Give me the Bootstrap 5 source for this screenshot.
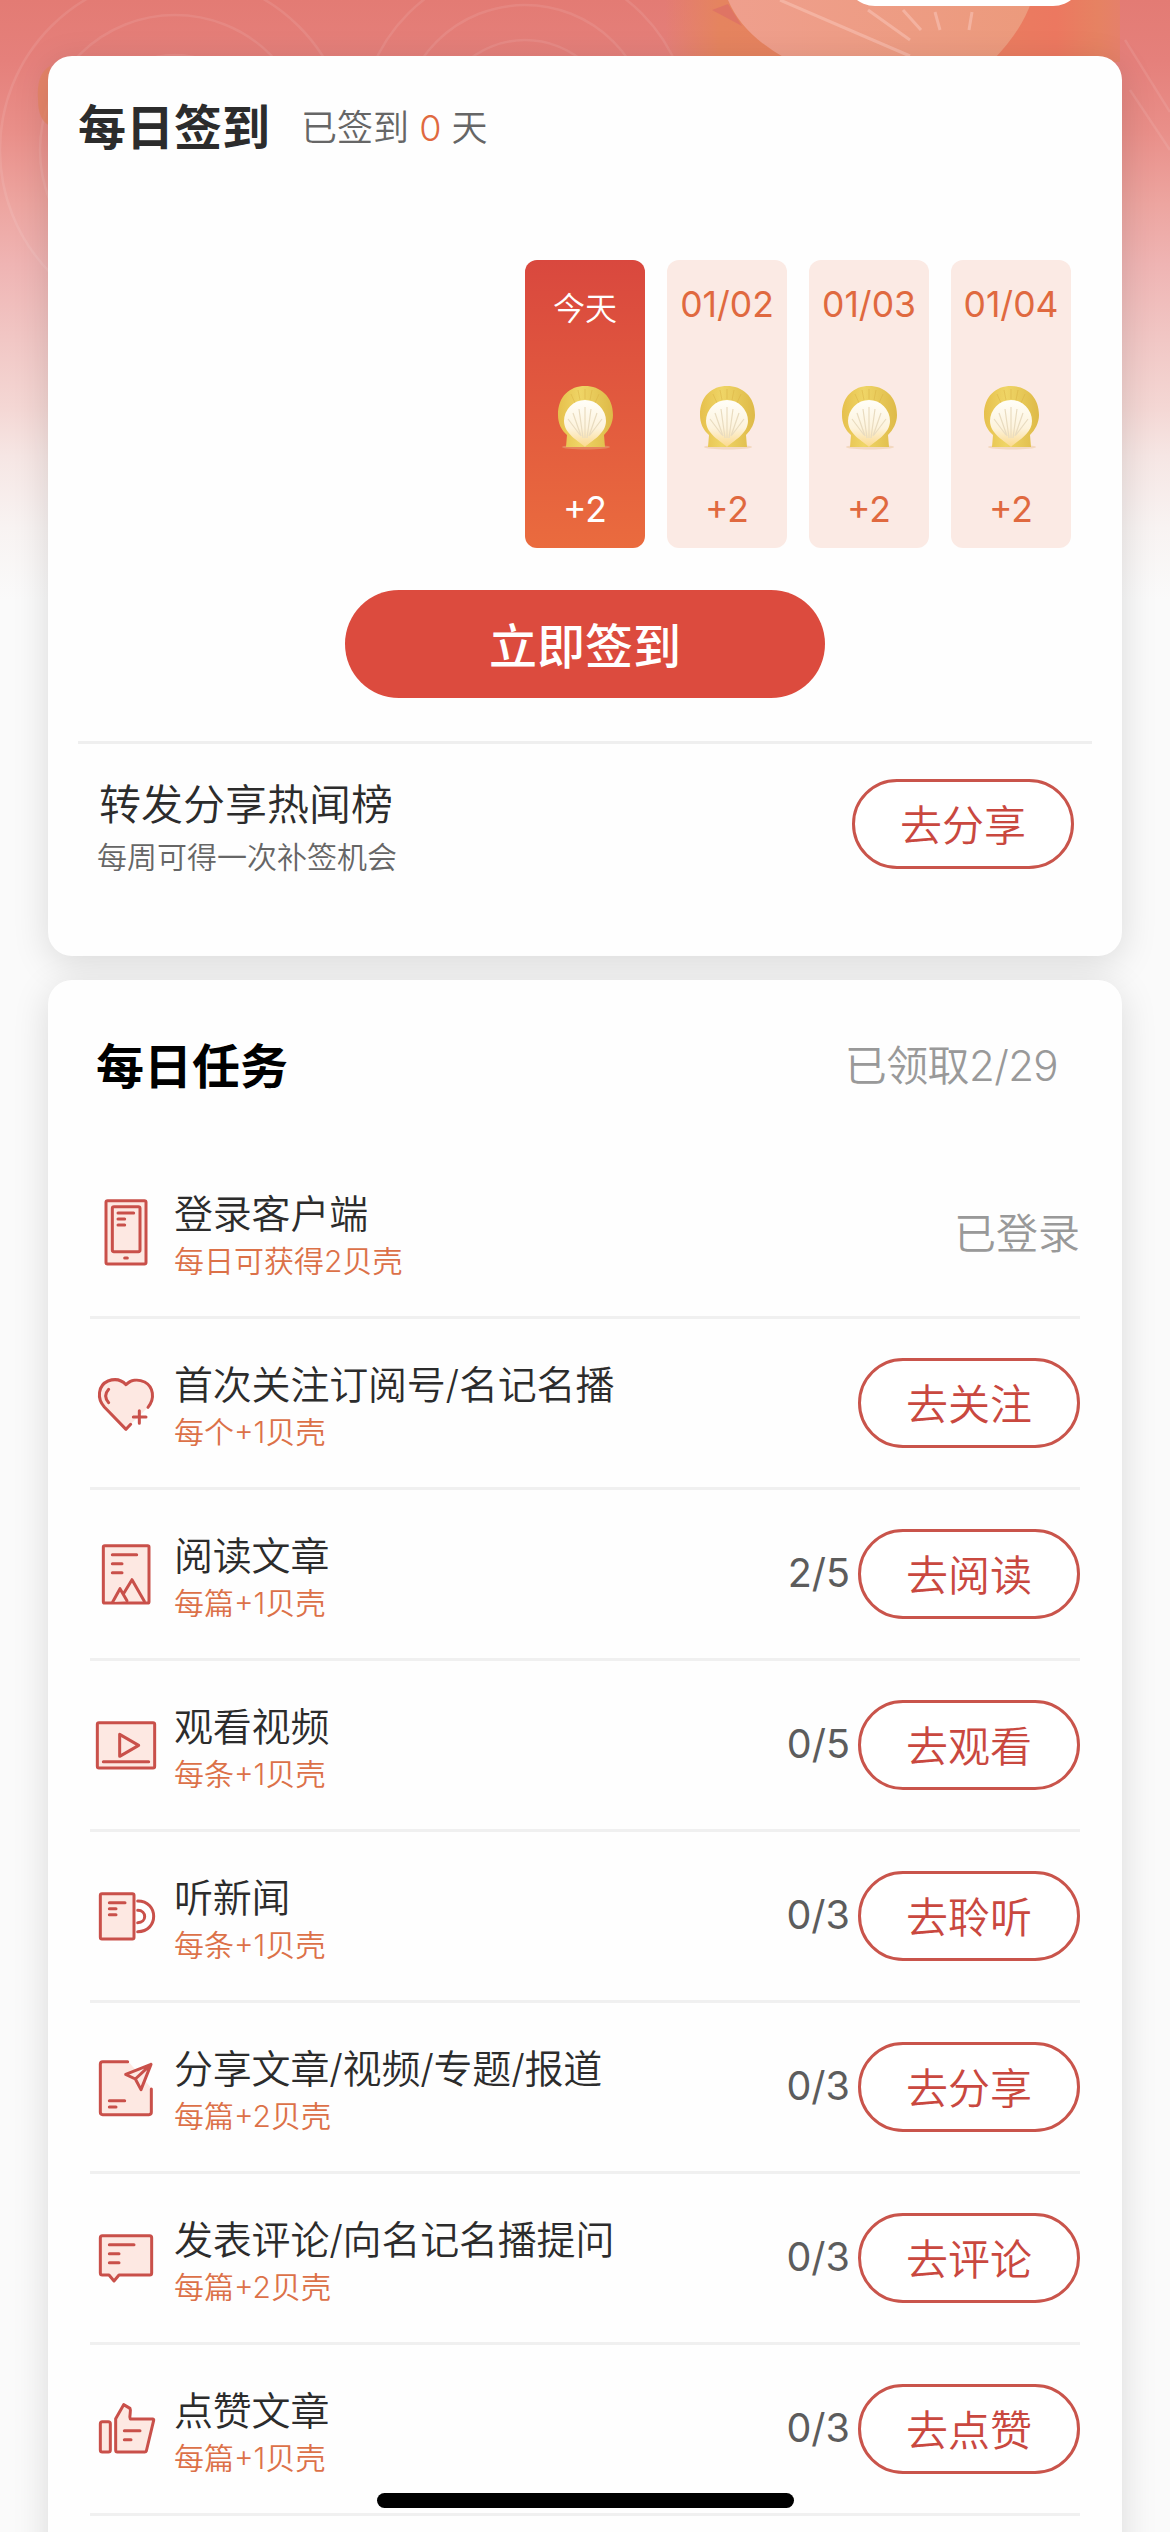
<!DOCTYPE html>
<html lang="zh-CN">
<head>
<meta charset="utf-8">
<meta name="viewport" content="width=device-width, initial-scale=1">
<title>每日签到</title>
<link href="https://cdn.jsdelivr.net/npm/bootstrap@5.3.0/dist/css/bootstrap.min.css" rel="stylesheet">
<style>
  html, body { height: 2532px; overflow: hidden; }
  body { font-family: Inter, "Noto Sans CJK SC", sans-serif; background: #fafafa; color: #2c2c2c; line-height: 1; font-weight: 350; }
  .hero { position: absolute; inset: 0 0 auto 0; width: 1170px; height: 600px; }
  .phone-page { position: relative; height: 2532px; padding: 56px 48px 0; overflow: hidden; }
  .panel { background: #fefefe; border-radius: 24px; box-shadow: 0 8px 36px rgba(0,0,0,.13); }
  .panel-sign { height: 900px; padding: 0 30px; }
  .panel-task { height: 1700px; margin-top: 24px; padding: 0 42px; }
  .head-sign { height: 204px; padding-top: 48px; }
  .ttl { font-size: 48px; font-weight: 700; line-height: 48px; }
  .days-count { font-size: 36px; color: #666; line-height: 48px; margin-left: 31px; }
  .accent { color: #e0693f; }
  .days { gap: 22px; padding-right: 21px; }
  .day { width: 120px; height: 288px; border-radius: 12px; background: #fbeae4; color: #e0693f; font-size: 35.5px; font-weight: 400; padding: 27px 0 20px; }
  .day.today { background: linear-gradient(#d9483e, #ea6b3e); color: #fff; }
  .day.today .when { font-size: 32px; font-weight: 350; padding-top: 4px; }
  .when, .pts { height: 36px; line-height: 36px; white-space: nowrap; }
  .shell { width: 64px; height: 66px; margin-top: 18px; }
  .btn-sign { font-family: "Noto Sans CJK SC", sans-serif; width: 480px; height: 108px; background: #dc4b3e; color: #fff; font-size: 48px; font-weight: 500; line-height: 1; margin: 42px auto 43px; border: 0; padding: 0 0 2px; }
  .rule { height: 3px; background: #efefef; }
  .share-row { padding: 35px 18px 0 21px; }
  .share-ttl { font-size: 42px; line-height: 51px; }
  .share-sub { font-size: 30px; line-height: 54px; color: #666; margin-left: -2px; }
  .btn-go { font-family: "Noto Sans CJK SC", sans-serif; width: 222px; height: 90px; border: 3px solid #c9544b; color: #c9483f; font-size: 42px; font-weight: 350; line-height: 1; padding: 0 0 2px; background: #fff; }
  .head-task { height: 168px; padding: 63px 22px 0 6px; color: #000; }
  .got { font-size: 42px; color: #999; line-height: 48px; }
  .head-task .got { letter-spacing: -.6px; margin-top: -1px; }
  .task { height: 171px; border-bottom: 3px solid #f0f0f0; padding-left: 4px; }
  .task .got { padding-top: 3px; }
  .task svg { width: 64px; height: 72px; margin-top: 2px; fill: #fde8e2; stroke: #c9504a; stroke-width: 9; stroke-linecap: round; stroke-linejoin: round; flex: none; }
  .task-text { padding: 9px 0 0 16px; }
  .t-name { font-size: 39px; line-height: 49px; letter-spacing: -.2px; }
  .t-sub { font-size: 30px; line-height: 47px; color: #dc7148; }
  .t-num { font-size: 39.5px; color: #5c5c5c; font-weight: 400; margin-right: 8px; }
  .home-bar { position: absolute; left: 377px; top: 2493px; width: 417px; height: 15px; border-radius: 8px; background: #000; }
</style>
</head>
<body>
<main class="phone-page">
  <svg class="hero" viewBox="0 0 1170 600" preserveAspectRatio="none">
    <defs>
      <linearGradient id="sky" x1="0" y1="0" x2="0" y2="1"><stop offset="0" stop-color="#e37b74"/><stop offset=".1" stop-color="#e5807b"/><stop offset=".22" stop-color="#e98f89"/><stop offset=".34" stop-color="#eda5a0"/><stop offset=".44" stop-color="#efb4b3"/><stop offset=".56" stop-color="#f1c6c4"/><stop offset=".68" stop-color="#f4d7d4"/><stop offset=".76" stop-color="#f6e6e4"/><stop offset=".88" stop-color="#f8f3f2"/><stop offset="1" stop-color="#fafafa"/></linearGradient>
      <linearGradient id="amber" x1="0" x2="1"><stop offset="0" stop-color="#e5845f" stop-opacity="0"/><stop offset=".12" stop-color="#e5845f"/><stop offset=".75" stop-color="#ea7c60"/><stop offset=".86" stop-color="#ec7860"/><stop offset=".95" stop-color="#e68262"/><stop offset="1" stop-color="#e5806a"/></linearGradient>
      <linearGradient id="petal" x1="0" x2="1"><stop offset="0" stop-color="#ef9f8d"/><stop offset="1" stop-color="#ec9a7c"/></linearGradient>
    </defs>
    <path fill="url(#sky)" d="M0 0h1170v600H0z"/>
    <g fill="none" stroke="#fff" stroke-opacity=".09" stroke-width="2.5">
      <circle cx="175" cy="150" r="95"/><circle cx="175" cy="150" r="135"/><circle cx="175" cy="150" r="175"/>
      <circle cx="525" cy="130" r="90"/><circle cx="525" cy="130" r="125"/><circle cx="525" cy="130" r="165"/>
      <path d="M1125 40l45 72M1130 90l40 60"/>
    </g>
    <path fill="#e5855f" opacity=".7" d="M50 66q-14 8-12 34 0 20 12 26z"/>
    <path fill="url(#amber)" d="M665 0h455v62H665z"/>
    <path fill="#df7464" d="M712 10l16-6 14 22z"/>
    <path fill="url(#petal)" d="M728 0h304q-10 30-37 58H785Q742 34 728 0z"/>
    <path fill="none" stroke="#f5b8a8" stroke-width="3" stroke-opacity=".8" d="M780 0l130 56M868 10l42 30M903 10l18 20M935 12l5 18M972 12l-3 18"/>
    <rect x="845" y="-54" width="238" height="60" rx="30" fill="#fff"/>
  </svg>

  <section class="panel panel-sign position-relative">
    <header class="head-sign d-flex align-items-start">
      <div class="ttl">每日签到</div>
      <div class="days-count">已签到 <span class="accent">0</span> 天</div>
    </header>
    <div id="days" class="days d-flex justify-content-end"></div>
    <button class="btn btn-sign rounded-pill d-block">立即签到</button>
    <div class="rule"></div>
    <div class="share-row d-flex justify-content-between align-items-start">
      <div>
        <div class="share-ttl">转发分享热闻榜</div>
        <div class="share-sub">每周可得一次补签机会</div>
      </div>
      <button class="btn btn-go rounded-pill">去分享</button>
    </div>
  </section>

  <section class="panel panel-task position-relative">
    <header class="head-task d-flex justify-content-between align-items-start">
      <div class="ttl">每日任务</div>
      <div class="got">已领取2/29</div>
    </header>
    <div id="tasks"></div>
  </section>
  <div class="home-bar"></div>
</main>
<script src="https://cdn.jsdelivr.net/npm/bootstrap@5.3.0/dist/js/bootstrap.bundle.min.js"></script>
<script>
  const shell = `<svg class="shell" viewBox="0 0 64 66"><defs><linearGradient id="gold" x1="0" x2="1"><stop offset="0" stop-color="#e6c04c"/><stop offset=".4" stop-color="#efd566"/><stop offset="1" stop-color="#deba48"/></linearGradient><linearGradient id="pearl" x1="0" y1="0" x2="0" y2="1"><stop offset="0" stop-color="#fffef8"/><stop offset=".6" stop-color="#fdf3dc"/><stop offset="1" stop-color="#fbd98c"/></linearGradient></defs>
    <ellipse cx="33" cy="63" rx="24" ry="2.5" fill="#e9bd8a" opacity=".4"/>
    <path fill="url(#gold)" d="M13 63l1-12C8 46 5 39 5 31 5 12 17 2 32 2s28 10 28 29c0 8-4 15-9 20l1 12z"/>
    <path fill="none" stroke="#d9b244" stroke-width="1" opacity=".5" d="M32 5v10M25 6l2 10M39 6l-2 10M18 10l4 9M46 10l-4 9"/>
    <path fill="url(#pearl)" d="M32 63C26 57 11 50 11 37a21 21 0 0 1 42 0C53 50 38 57 32 63z"/>
    <path fill="none" stroke="#e9dcc0" stroke-width="1.2" d="M32 54V23M30 54l-4-29M34 54l4-29M28 52L20 29M36 52l8-23M27 51L15 35M37 51l12-16"/></svg>`;
  const days = [["今天", "today"], ["01/02", ""], ["01/03", ""], ["01/04", ""]];
  document.getElementById("days").innerHTML = days.map(([d, c]) =>
    `<div class="day ${c} d-flex flex-column align-items-center justify-content-between"><div class="when">${d}</div>${shell}<div class="pts">+2</div></div>`).join("");

  const tasks = [
    ["登录客户端", "每日可获得2贝壳", "", "", "42 51 192 216",
      '<rect x="78" y="62" width="120" height="190" rx="5"/><rect x="97" y="80" width="83" height="135" rx="5"/><path d="M114 99h47M114 117h20M114 135h20M134 234h8"/>'],
    ["首次关注订阅号/名记名播", "每个+1贝壳", "", "去关注", "42 564 192 216",
      '<path d="M152 733L138 748 73 681C50 655 54 616 84 603 106 595 126 601 138 614 152 600 173 596 194 606 220 620 226 655 204 682"/><path fill="none" d="M86 628Q68 648 86 668M178 692v38M160 711h38"/>'],
    ["阅读文章", "每篇+1贝壳", "2/5", "去阅读", "42 57 192 216",
      '<rect x="70" y="77" width="137" height="172" rx="4"/><path d="M97 104h73M97 131h29M97 158h29M98 246L120 206 141 242M130 222L156 179 193 244"/>'],
    ["观看视频", "每条+1贝壳", "0/5", "去观看", "42 570 192 216",
      '<rect x="52" y="608" width="172" height="136" rx="5"/><path d="M119 643v66l57-33zM70 725h136"/>'],
    ["听新闻", "每条+1贝壳", "0/3", "去聆听", "42 63 192 216",
      '<rect x="61" y="101" width="101" height="136" rx="5"/><path d="M88 128h47M88 146h20M88 164h20"/><path fill="none" d="M173 123C237 123 237 215 173 215M173 151C201 151 201 188 173 188"/>'],
    ["分享文章/视频/专题/报道", "每篇+2贝壳", "0/3", "去分享", "42 576 192 216",
      '<path stroke="none" d="M62 606h84l68 78v80H62z"/><path fill="none" d="M143 605H68q-7 0-7 7v145q0 7 7 7h139q7 0 7-7V687"/><path d="M213 613L137 643 166 657 183 689zM213 613L166 657M88 722h46M88 741h20"/>'],
    ["发表评论/向名记名播提问", "每篇+2贝壳", "0/3", "去评论", "42 69 192 216",
      '<path d="M67 107h142q6 0 6 6v106q0 6-6 6h-92L102 243 87 225H67q-6 0-6-6V113q0-6 6-6z"/><path d="M88 134h74M88 161h29M88 188h29"/>'],
    ["点赞文章", "每篇+1贝壳", "0/3", "去点赞", "42 582 192 216",
      '<rect x="61" y="665" width="30" height="91" rx="6"/><path d="M107 656L131 614 150 625C155 635 146 645 151 657H218Q222 657 221 661L199 753Q198 756 194 756H112Q107 756 107 750z"/><path d="M133 692h47M133 719h20"/>']
  ];
  document.getElementById("tasks").innerHTML = tasks.map(([n, s, c, b, vb, art]) =>
    `<div class="task d-flex align-items-center"><svg viewBox="${vb}">${art}</svg>
      <div class="task-text flex-grow-1"><div class="t-name">${n}</div><div class="t-sub">${s}</div></div>
      ${c ? `<span class="t-num">${c}</span>` : ""}${b ? `<button class="btn btn-go rounded-pill">${b}</button>` : `<span class="got">已登录</span>`}</div>`).join("");
</script>
</body>
</html>
